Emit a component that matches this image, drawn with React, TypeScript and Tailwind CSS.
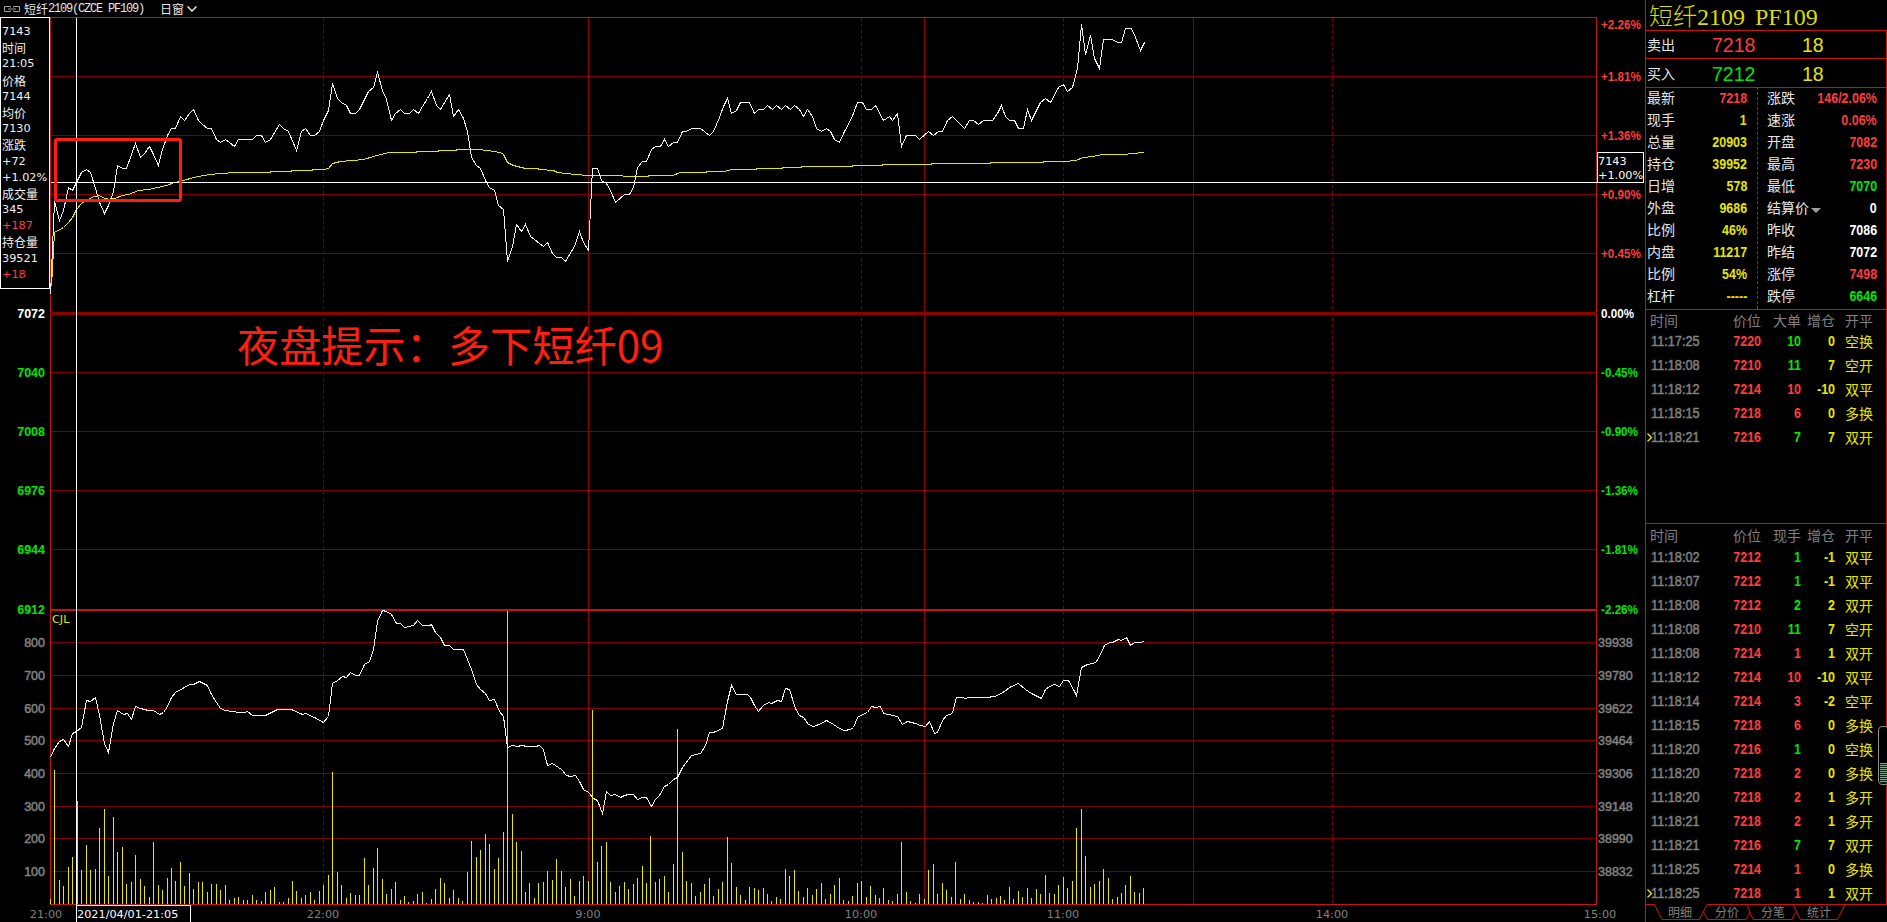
import type { ReactNode } from 'react';

const RED = '#ff3c3c';
const GREEN = '#00e600';
const YELLOW = '#e6e600';
const GRAY = '#808080';
const FRAME = '#c81410';
const GRID = '#800000';

const LEFT = 50;
const RIGHT = 1596;
const BASE = 904;
const STEP = (RIGHT - LEFT) / 345;

const priceLine =
  '50,294 54,201 59,220 63,210 68,187 72,190 77,180 81,172 86,169 90,172 95,188 99,202 104,213 108,205 113,191 117,165 122,168 126,168 131,154 135,143 140,157 144,153 149,146 153,154 158,165 162,149 167,135 171,128 175,128 180,116 184,120 189,113 193,109 198,120 202,124 207,128 211,128 216,139 220,142 225,139 229,142 234,146 238,139 252,139 256,135 261,135 265,142 270,139 279,124 283,128 288,131 296,150 301,131 305,128 310,135 314,135 319,131 323,120 328,110 332,83 337,98 341,102 346,105 350,113 355,113 359,109 368,91 373,87 377,72 382,90 386,99 391,120 395,113 400,109 404,113 409,113 413,109 418,113 422,106 427,98 431,91 436,105 440,109 449,94 453,116 458,109 463,118 467,131 471,157 476,165 480,168 485,180 489,187 494,190 498,205 503,209 507,261 512,246 516,224 521,231 525,224 530,236 543,246 547,242 552,253 556,257 561,257 565,261 574,246 579,231 583,242 588,250 592,168 597,168 601,180 606,183 610,190 615,202 624,194 629,194 633,187 637,167 642,161 646,161 651,149 655,146 660,146 664,139 668,146 673,142 677,142 682,131 686,131 691,128 700,128 709,135 713,131 719,117 723,106 727,98 731,113 736,110 740,102 749,102 754,113 758,109 763,109 767,105 772,109 776,105 781,109 785,105 790,109 794,105 799,109 803,116 807,109 812,116 816,128 821,131 826,128 830,131 834,139 839,142 844,131 848,124 853,113 857,102 862,102 866,109 871,109 875,105 883,120 889,116 892,120 897,113 901,146 906,135 915,135 919,139 928,131 933,135 938,131 942,131 947,120 952,116 964,128 969,120 973,120 978,124 983,120 992,120 997,113 1001,105 1005,116 1009,120 1014,120 1018,128 1023,128 1027,109 1031,120 1040,102 1045,98 1050,102 1058,87 1063,84 1067,91 1072,87 1077,68 1081,24 1085,54 1090,35 1094,58 1099,68 1103,39 1112,39 1117,42 1121,42 1125,28 1131,28 1135,37 1140,50 1144,42';

const averageLine =
  '51,286 52,268 54,232 63,227 68,222 72,217 76,209 81,203 87,199 94,196 99,195 104,198 110,199 114,198 122,195 128,194 138,190 148,189 157,187 166,185 174,182 183,180 193,177 203,175 218,173 237,172 267,172 273,171 290,171 292,170 311,170 313,169 323,169 328,168 332,163 340,161 352,160 363,159 373,156 380,154 389,152 415,152 417,151 437,151 439,150 455,150 457,149 478,149 487,150 500,152 503,154 507,162 513,165 525,168 537,168 539,169 553,170 557,172 565,173 575,174 588,175 620,175 625,176 647,176 649,175 672,175 680,172 705,172 707,171 724,171 731,169 755,169 757,168 781,168 783,167 800,167 802,166 851,166 853,165 881,165 883,164 930,164 932,163 989,163 991,162 1042,162 1044,161 1065,161 1075,160 1083,157 1092,156 1102,154 1123,154 1132,153 1144,152';

const openInterestLine =
  '50,757 54,748 59,741 63,739 68,746 72,733 76,731 81,727 86,700 90,701 95,697 99,715 104,743 108,752 113,723 117,710 123,714 127,713 131,719 135,706 140,708 148,710 153,710 159,714 163,712 167,706 171,697 175,692 184,687 189,684 193,684 199,681 207,685 211,694 216,702 220,708 225,710 239,712 244,712 247,711 252,715 265,715 277,709 291,709 302,714 305,713 314,717 323,722 328,716 332,683 337,680 342,676 346,677 350,672 355,675 359,675 364,664 369,661 373,649 377,621 382,610 386,611 391,614 396,623 400,623 404,627 413,625 417,620 422,625 429,625 431,624 435,632 440,637 444,645 449,645 453,649 463,649 467,659 471,669 476,684 480,689 485,693 489,700 494,699 499,711 503,716 507,747 512,745 517,746 521,745 527,746 535,746 539,745 543,749 547,765 552,763 561,769 566,775 570,776 575,775 579,781 583,789 588,792 593,798 597,800 602,813 606,791 610,795 615,794 620,797 624,795 628,794 633,794 637,799 642,797 646,797 651,806 655,799 659,795 664,786 668,784 673,779 677,777 682,767 691,755 700,753 705,745 709,732 713,732 722,728 727,701 731,685 736,694 747,694 750,697 754,705 758,711 763,705 768,702 771,703 777,700 781,701 785,688 789,689 795,708 799,715 803,717 808,724 813,726 821,723 826,720 833,724 839,728 844,730 850,729 853,727 857,717 862,714 867,712 871,706 875,707 880,706 883,713 888,714 897,716 902,724 907,721 915,723 920,725 925,726 929,721 934,733 937,732 942,720 946,715 952,713 956,697 962,697 965,698 968,697 985,697 995,696 1004,691 1009,687 1018,683 1025,689 1031,693 1041,698 1045,689 1049,686 1054,684 1059,686 1063,680 1068,680 1073,689 1076,695 1081,667 1087,664 1093,663 1096,661 1099,656 1104,645 1109,642 1112,642 1118,639 1121,640 1126,637 1130,645 1134,642 1141,642 1144,640';

// one bar per minute, height in px above the baseline
const volumes = [
  5, 134, 24, 18, 37, 47, 103, 34, 59, 34, 35, 76, 95, 28, 87, 52, 57, 20, 22, 49,
  25, 18, 7, 62, 19, 14, 26, 36, 23, 42, 18, 31, 15, 22, 22, 12, 20, 20, 14, 19,
  4, 6, 7, 4, 4, 9, 4, 3, 12, 14, 17, 2, 2, 6, 23, 13, 6, 9, 12, 4,
  13, 19, 29, 132, 32, 19, 6, 11, 9, 9, 46, 19, 36, 56, 25, 10, 15, 22, 4, 8,
  2, 3, 10, 12, 1, 5, 15, 26, 21, 6, 14, 6, 3, 32, 63, 47, 54, 70, 60, 35,
  46, 72, 293, 90, 62, 53, 12, 21, 6, 21, 22, 33, 24, 45, 33, 17, 25, 8, 23, 28,
  23, 194, 42, 58, 62, 22, 12, 18, 22, 15, 20, 26, 38, 21, 68, 22, 25, 28, 12, 40,
  175, 52, 23, 21, 8, 12, 20, 26, 8, 15, 22, 67, 41, 17, 9, 4, 17, 16, 14, 16,
  10, 3, 7, 5, 35, 28, 34, 13, 7, 16, 9, 15, 21, 5, 10, 19, 26, 4, 3, 8,
  21, 23, 7, 18, 9, 6, 16, 4, 3, 10, 62, 12, 3, 1, 10, 5, 34, 40, 10, 21,
  14, 7, 42, 5, 10, 4, 2, 2, 1, 9, 5, 6, 8, 4, 17, 5, 13, 7, 16, 6,
  15, 10, 29, 11, 10, 19, 27, 16, 23, 76, 95, 48, 17, 20, 23, 35, 26, 5, 7, 11,
  19, 28, 12, 11, 16,
];

const gridRows = [76, 135, 194, 253, 372, 431, 490, 549, 642, 675, 708, 740, 773, 806, 838, 871];

const priceTicks = [
  { y: 313, price: '7072', color: '#ffffff' },
  { y: 372, price: '7040', color: GREEN },
  { y: 431, price: '7008', color: GREEN },
  { y: 490, price: '6976', color: GREEN },
  { y: 549, price: '6944', color: GREEN },
  { y: 609, price: '6912', color: GREEN },
];

const percentTicks = [
  { y: 24, label: '+2.26%', color: RED },
  { y: 76, label: '+1.81%', color: RED },
  { y: 135, label: '+1.36%', color: RED },
  { y: 194, label: '+0.90%', color: RED },
  { y: 253, label: '+0.45%', color: RED },
  { y: 313, label: '0.00%', color: '#ffffff' },
  { y: 372, label: '-0.45%', color: GREEN },
  { y: 431, label: '-0.90%', color: GREEN },
  { y: 490, label: '-1.36%', color: GREEN },
  { y: 549, label: '-1.81%', color: GREEN },
  { y: 609, label: '-2.26%', color: GREEN },
];

const volumeTicks = [
  { y: 642, volume: '800', interest: '39938' },
  { y: 675, volume: '700', interest: '39780' },
  { y: 708, volume: '600', interest: '39622' },
  { y: 740, volume: '500', interest: '39464' },
  { y: 773, volume: '400', interest: '39306' },
  { y: 806, volume: '300', interest: '39148' },
  { y: 838, volume: '200', interest: '38990' },
  { y: 871, volume: '100', interest: '38832' },
];

const timeTicks = [
  { x: 46, label: '21:00' },
  { x: 323, label: '22:00' },
  { x: 588, label: '9:00' },
  { x: 861, label: '10:00' },
  { x: 1063, label: '11:00' },
  { x: 1332, label: '14:00' },
  { x: 1600, label: '15:00' },
];

const infoRows = [
  ['7143'], ['时间'], ['21:05'], ['价格'], ['7144'], ['均价'], ['7130'], ['涨跌'],
  ['+72'], ['+1.02%'], ['成交量'], ['345'], ['+187', 'text-[#ff3c3c]'], ['持仓量'],
  ['39521'], ['+18', 'text-[#ff3c3c]'],
];

const R = 'text-[#ff3c3c]';
const G = 'text-[#00e600]';
const Y = 'text-[#e6e600]';
const W = 'text-white';

const quoteLeft = [
  ['最新', '7218', R], ['现手', '1', Y], ['总量', '20903', Y], ['持仓', '39952', Y],
  ['日增', '578', Y], ['外盘', '9686', Y], ['比例', '46%', Y], ['内盘', '11217', Y],
  ['比例', '54%', Y], ['杠杆', '-----', Y],
];

const quoteRight = [
  ['涨跌', '146/2.06%', R], ['速涨', '0.06%', R], ['开盘', '7082', R], ['最高', '7230', R],
  ['最低', '7070', G], ['结算价', '0', W], ['昨收', '7086', W], ['昨结', '7072', W],
  ['涨停', '7498', R], ['跌停', '6646', G],
];

const bigOrders = [
  ['11:17:25', '7220', '10', G, '0', '空换'],
  ['11:18:08', '7210', '11', G, '7', '空开'],
  ['11:18:12', '7214', '10', R, '-10', '双平'],
  ['11:18:15', '7218', '6', R, '0', '多换'],
  ['11:18:21', '7216', '7', G, '7', '双开'],
];

const trades = [
  ['11:18:02', '7212', '1', G, '-1', '双平'],
  ['11:18:07', '7212', '1', G, '-1', '双平'],
  ['11:18:08', '7212', '2', G, '2', '双开'],
  ['11:18:08', '7210', '11', G, '7', '空开'],
  ['11:18:08', '7214', '1', R, '1', '双开'],
  ['11:18:12', '7214', '10', R, '-10', '双平'],
  ['11:18:14', '7214', '3', R, '-2', '空平'],
  ['11:18:15', '7218', '6', R, '0', '多换'],
  ['11:18:20', '7216', '1', G, '0', '空换'],
  ['11:18:20', '7218', '2', R, '0', '多换'],
  ['11:18:20', '7218', '2', R, '1', '多开'],
  ['11:18:21', '7218', '2', R, '1', '多开'],
  ['11:18:21', '7216', '7', G, '7', '双开'],
  ['11:18:25', '7214', '1', R, '0', '多换'],
  ['11:18:25', '7218', '1', R, '1', '双开'],
];

function Chart() {
  return (
    <svg width="1645" height="905" viewBox="0 17 1645 905" shapeRendering="crispEdges" className="block">
      <g transform="translate(0.5 0.5)" fill="none">
        {gridRows.map((y) => (
          <line key={y} x1={LEFT} x2={RIGHT} y1={y} y2={y} stroke={GRID} />
        ))}
        {[323, 861, 1063, 1332].map((x) => (
          <line key={x} x1={x} x2={x} y1={17} y2={BASE} stroke={GRID} strokeDasharray="3 3" />
        ))}
        {[588, 924, 1193].map((x) => (
          <line key={x} x1={x} x2={x} y1={17} y2={BASE} stroke="#8c0000" />
        ))}
        <rect x={LEFT} y={17} width={RIGHT - LEFT} height={BASE - 17} stroke={FRAME} />
      </g>
      <rect x={50} y={312} width={1547} height={3} fill="#8c0000" />
      <rect x={50} y={609} width={1547} height={2} fill={FRAME} />

      {volumes.map((h, i) => (
        <rect key={i} x={LEFT + Math.round(i * STEP)} y={BASE - h} width={1} height={h} fill={YELLOW} />
      ))}

      <g transform="translate(0.5 0.5)" fill="none">
        <polyline points={averageLine} stroke={YELLOW} />
        <polyline points={priceLine} stroke="#f0f0f0" />
        <polyline points={openInterestLine} stroke="#f0f0f0" />
        <line x1={76} x2={76} y1={17} y2={922} stroke="#ffffff" />
        <line x1={LEFT} x2={1643} y1={182} y2={182} stroke="#ffffff" />
      </g>

      <g className="font-['Liberation_Sans',sans-serif] text-[12.5px] font-bold">
        {priceTicks.map((t) => (
          <text key={t.y} x={45} y={t.y + 5} textAnchor="end" fill={t.color}>{t.price}</text>
        ))}
        {percentTicks.map((t) => (
          <text key={t.y} x={1601} y={t.y + 5} fill={t.color} textLength={t.label.length === 5 ? 33 : t.label[0] === '+' ? 40 : 37} lengthAdjust="spacingAndGlyphs">
            {t.label}
          </text>
        ))}
      </g>
      <g className="font-['Liberation_Sans',sans-serif] text-[12.5px]" fill={GRAY} stroke={GRAY} strokeWidth="0.5">
        {volumeTicks.map((t) => (
          <g key={t.y}>
            <text x={45} y={t.y + 5} textAnchor="end">{t.volume}</text>
            <text x={1598} y={t.y + 5}>{t.interest}</text>
          </g>
        ))}
      </g>
      <g className="font-['DejaVu_Sans',sans-serif] text-[11.25px]" fill={GRAY}>
        {timeTicks.map((t) => (
          <text key={t.x} x={t.x} y={918} textAnchor="middle">{t.label}</text>
        ))}
        <text x={52} y={623} fill={YELLOW}>CJL</text>
      </g>
    </svg>
  );
}

function InfoBox() {
  return (
    <div className="absolute left-0 top-0 h-[272px] w-[50px] border border-white bg-black pl-px pt-[6px] text-[#f0f0f0]">
      {infoRows.map(([text, color], i) => (
        <div
          key={i}
          className={`h-[16.2px] whitespace-nowrap leading-[16.2px] ${/[+\d]/.test(text) ? "font-['DejaVu_Sans',sans-serif] text-[11.25px]" : 'text-[12px]'} ${color ?? ''}`}
        >
          {text}
        </div>
      ))}
    </div>
  );
}

function Num({ children, className }: { children: ReactNode; className?: string }) {
  return (
    <span className={`origin-right scale-x-[0.89] text-right font-['Liberation_Sans',sans-serif] text-[14px] font-bold ${className ?? ''}`}>
      {children}
    </span>
  );
}

function BestQuote({ label, price, color, lots }: { label: string; price: string; color: string; lots: string }) {
  return (
    <div className="flex items-center border-b border-[#c81410] pl-px pt-px leading-[24px]">
      <span className="w-[65px] pb-0.5 text-[14px] text-[#e6e6e6]">{label}</span>
      <span className={`w-[90px] font-['Liberation_Sans',sans-serif] text-[19.5px] ${color}`}>{price}</span>
      <span className="font-['Liberation_Sans',sans-serif] text-[19.5px] text-[#e6e600]">{lots}</span>
    </div>
  );
}

function QuoteRow({ label, value, color }: { label: string; value: string; color: string }) {
  return (
    <div className="flex h-[22px] items-center justify-between">
      <span className="flex items-center pb-px text-[14px] text-[#e6e6e6]">
        {label}
        {label === '结算价' && (
          <span className="ml-0.5 mt-1.5 border-x-[5px] border-t-[5px] border-x-transparent border-t-[#a0a0a0]" />
        )}
      </span>
      <Num className={color}>{value}</Num>
    </div>
  );
}

function TickTable({ volumeTitle, rows, headClass }: { volumeTitle: string; rows: string[][]; headClass: string }) {
  return (
    <>
      <div className={`flex items-center pl-1 pt-px text-[14px] leading-none text-[#808080] ${headClass}`}>
        <span className="w-[62px]">时间</span>
        <span className="w-[49px] text-right">价位</span>
        <span className="w-10 text-right">{volumeTitle}</span>
        <span className="w-[34px] text-right">增仓</span>
        <span className="ml-2.5">开平</span>
      </div>
      {rows.map(([time, price, lots, lotsColor, change, kind], i) => (
        <div key={i} className="relative flex h-6 items-center pl-[5px] text-[14px]">
          {i === rows.length - 1 && (
            <svg width="6" height="9" viewBox="0 0 6 9" className="absolute left-px top-2 z-10">
              <path d="M0.5 0.5L4.5 4.5L0.5 8.5" stroke={YELLOW} strokeWidth="1.4" fill="none" />
            </svg>
          )}
          <span className="w-[61px] origin-left scale-x-[0.91] font-['Liberation_Sans',sans-serif] text-[#808080] [-webkit-text-stroke:0.5px_#808080]">
            {time}
          </span>
          <Num className="w-[49px] text-[#ff3c3c]">{price}</Num>
          <Num className={`w-10 ${lotsColor}`}>{lots}</Num>
          <Num className="w-[34px] text-[#e6e600]">{change}</Num>
          <span className="ml-2.5 text-[#e6e600]">{kind}</span>
        </div>
      ))}
    </>
  );
}

function BottomTabs() {
  return (
    <div className="relative flex h-[18px] pl-[22px] text-[12px] leading-[15px] text-[#808080]">
      <svg width="242" height="18" viewBox="0 0 242 18" className="absolute left-[-1px] top-0">
        <path
          d="M0 0.5H9.5L17 15.5H54.5L62 0.5H241M58.5 8L62.5 15.5H101L105 8M102 0.5L108 15.5H147L151 8M148 0.5L155.5 15.5H192.5L200 0.5"
          stroke={FRAME}
          fill="none"
        />
      </svg>
      <span className="w-[47px]">明细</span>
      <span className="w-[46px]">分价</span>
      <span className="w-[46px]">分笔</span>
      <span>统计</span>
    </div>
  );
}

export default function App() {
  return (
    <div className="relative flex h-[922px] w-[1887px] overflow-hidden bg-black font-['Noto_Sans_CJK_SC',sans-serif]">
      <main className="flex w-[1645px] shrink-0 flex-col">
        <header className="flex h-[17px] items-center pl-1 text-[12px] leading-[17px] text-[#e6e6e6]">
          <svg width="16" height="6" viewBox="0 0 16 6" fill="none" stroke="#a0a0a0">
            <path d="M6.5 1.5V0.5H0.5V5.5H6.5V4.5M9.5 1.5V0.5H15.5V5.5H9.5V4.5M4 3H12" />
          </svg>
          <span className="ml-1">短纤</span>
          <span className="w-[96px] whitespace-nowrap pt-px font-['Liberation_Mono',monospace] tracking-[-1.2px]">2109(CZCE PF109)</span>
          <span className="ml-4">日窗</span>
          <svg width="10" height="6" viewBox="0 0 10 6" className="ml-[3px]" fill="none" stroke="#e6e6e6" strokeWidth="1.5">
            <path d="M0.5 0.5L5 5L9.5 0.5" />
          </svg>
        </header>

        <section className="relative h-[905px]">
          <Chart />
          <InfoBox />
          <div className="absolute left-[54px] top-[121px] h-[64px] w-[128px] rounded-[3px] border-3 border-[#ff1e10]" />
          <div className="absolute left-[237px] top-[297px] whitespace-nowrap text-[42.2px] leading-[60px] text-[#ff1e10]">夜盘提示：多下短纤09</div>
          <div className="absolute left-[1597px] top-[135px] h-[31px] w-[47px] whitespace-nowrap border border-white bg-black font-['DejaVu_Sans',sans-serif] text-[11.25px] leading-[14px] text-white">
            <div className="pt-0.5">7143</div>
            <div>+1.00%</div>
          </div>
          <div className="absolute left-[76px] top-[888px] h-[18px] w-[115px] border border-white bg-black font-['DejaVu_Sans',sans-serif] text-[11.25px] leading-[17px] text-white">
            2021/04/01-21:05
          </div>
        </section>
      </main>

      <aside className="flex w-[242px] flex-col border-l border-[#c81410]">
        <h1 className="h-[30px] whitespace-nowrap pl-[3px] text-[24px] font-light leading-[30px] text-[#dcdc00]">
          短纤<span className="font-['Liberation_Serif',serif] [word-spacing:4px]">2109 PF109</span>
        </h1>
        <div className="flex h-[875px] flex-col border-r border-t border-[#c81410]">
          <div className="grid h-[57px] grid-rows-[28px_29px]">
            <BestQuote label="卖出" price="7218" color={R} lots="18" />
            <BestQuote label="买入" price="7212" color={G} lots="18" />
          </div>
          <div className="flex h-[222px] border-b border-[#c81410]">
            <div className="-mt-px w-[112px] border-r border-dashed border-[#c81410] pl-px pr-[10px]">
              {quoteLeft.map(([label, value, color], i) => (
                <QuoteRow key={i} label={label} value={value} color={color} />
              ))}
            </div>
            <div className="-mt-px flex-1 pl-[9px] pr-[9px]">
              {quoteRight.map(([label, value, color], i) => (
                <QuoteRow key={i} label={label} value={value} color={color} />
              ))}
            </div>
          </div>
          <div className="h-[214px] border-b border-[#c81410]">
            <TickTable volumeTitle="大单" rows={bigOrders} headClass="h-[19px]" />
          </div>
          <div>
            <TickTable volumeTitle="现手" rows={trades} headClass="h-[21px]" />
          </div>
        </div>
        <div className="-mt-px">
          <BottomTabs />
        </div>
      </aside>

      {/* volume meter docked on the window edge */}
      <div className="absolute left-[1878px] top-[726px] flex h-[59px] w-[11px] items-end rounded-[4px] border border-[#909090] bg-black p-px">
        <div className="h-[20px] w-full bg-[repeating-linear-gradient(to_bottom,#3cc878_0_1px,#0a2814_1px_2px)]" />
      </div>
    </div>
  );
}
